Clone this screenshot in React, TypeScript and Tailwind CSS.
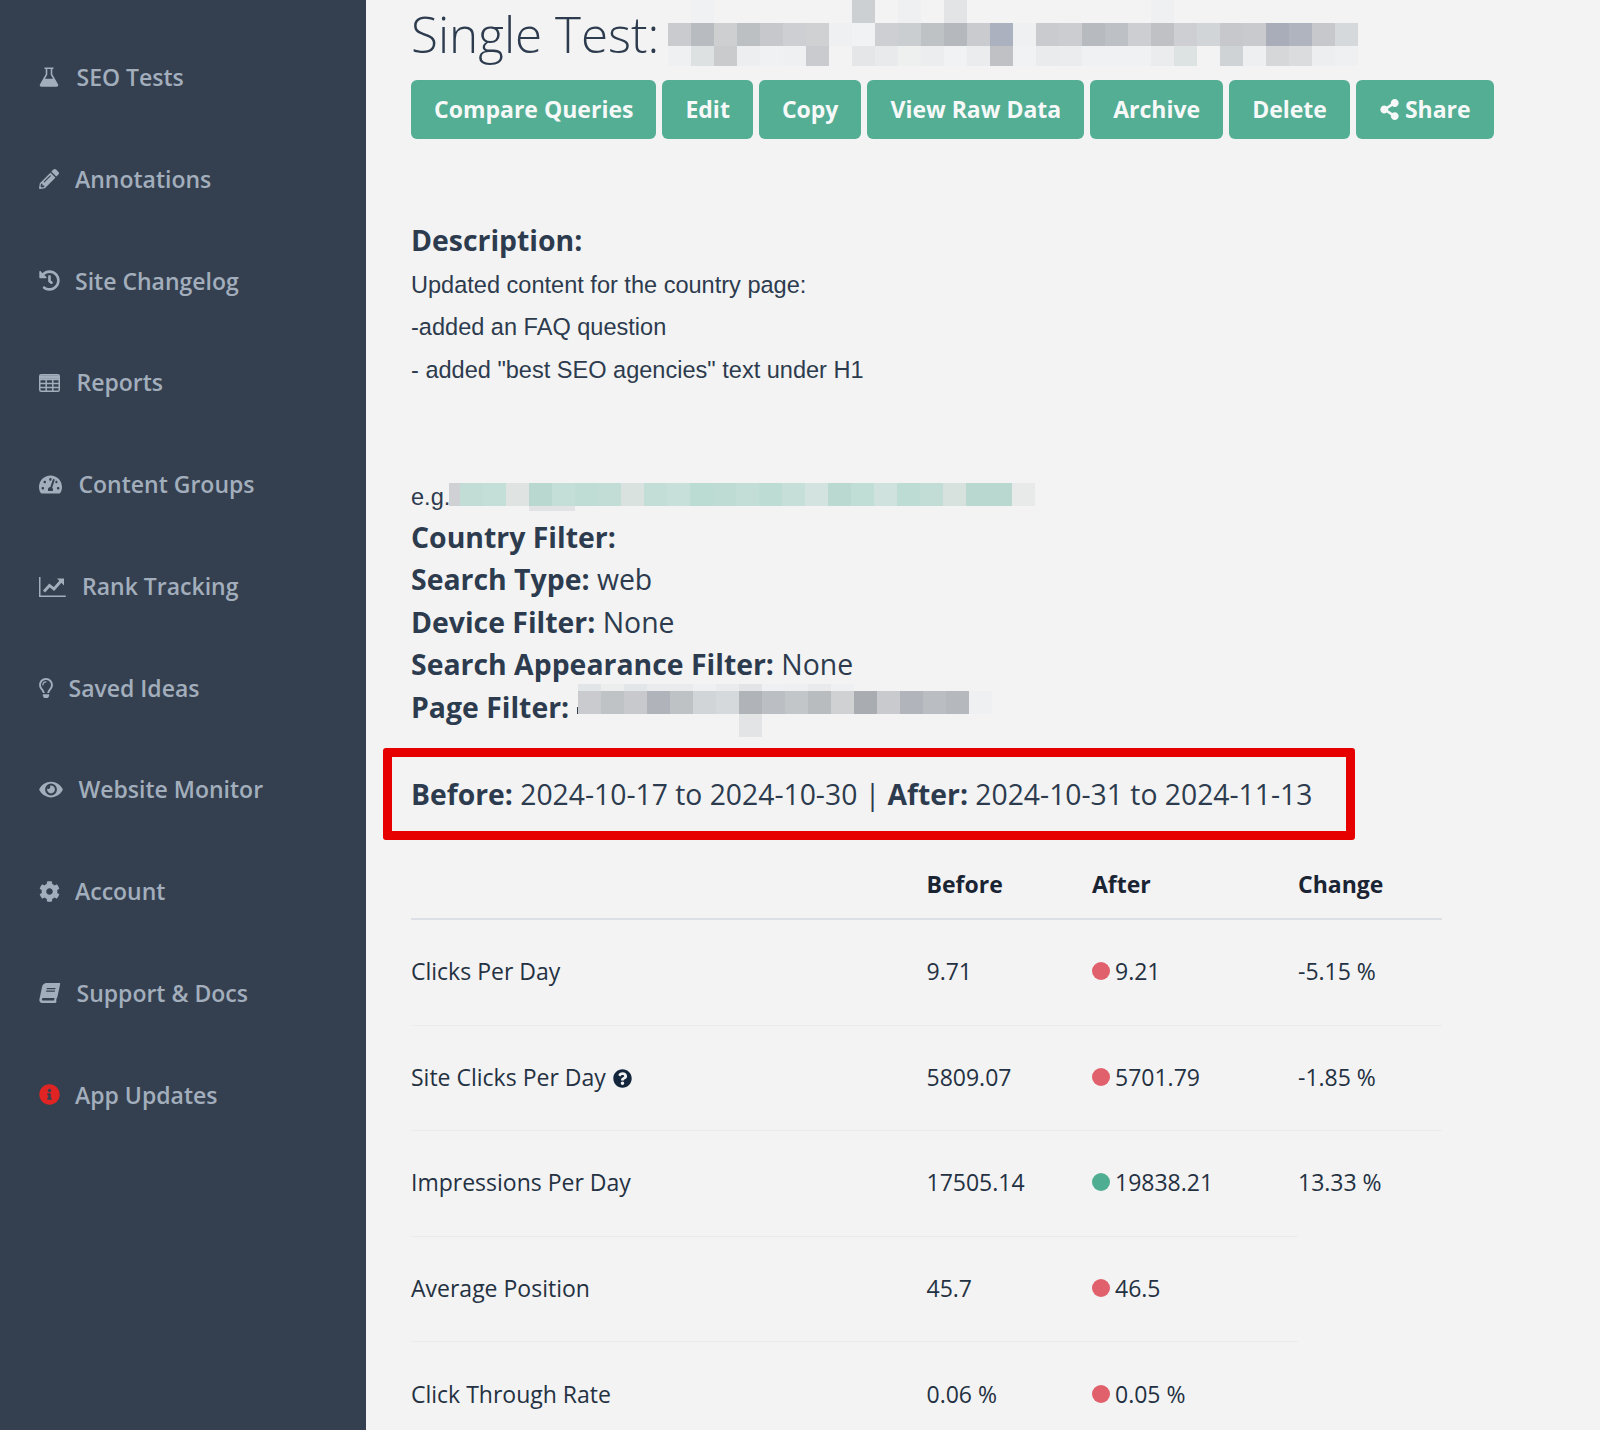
import { type ReactNode } from "react";
import {
  FaBook,
  FaCog,
  FaEye,
  FaHistory,
  FaInfoCircle,
  FaPencilAlt,
  FaQuestionCircle,
  FaRegLightbulb,
  FaShareAlt,
  FaTachometerAlt,
} from "react-icons/fa";

function FlaskIcon() {
  return (
    <svg viewBox="0 0 20 20" className="w-[20px] h-[20px]" fill="currentColor">
      <path d="M5.5.5h9v1.6h-1.2v5.2L19 17.2c.7 1.3-.1 2.6-1.5 2.6H2.500C1.100 19.800.300 18.500 1 17.200L6.700 7.300V2.100H5.500zM8.300 2.100v5.700L6 11.800h8l-2.300-4V2.100z" fillRule="evenodd" />
    </svg>
  );
}

function TableIcon() {
  return (
    <svg viewBox="0 0 21 18" className="w-[21px] h-[18px]" fill="none" stroke="currentColor" strokeWidth="1.5">
      <rect x=".75" y=".75" width="19.500" height="16.500" rx="1.500" />
      <path d="M.75 5.500h19.500M.75 9.500h19.500M.75 13.500h19.500M7.200 5.500v12M13.800 5.500v12" />
      <path d="M.75 3.100h19.500" strokeWidth="3.500" />
    </svg>
  );
}

function RankIcon() {
  return (
    <svg viewBox="0 0 27 21" className="w-[27px] h-[21px]" fill="none" stroke="currentColor">
      <path d="M.75 1v19.200h26" strokeWidth="1.500" />
      <path d="M5 15.500l5.500-6 4.500 3.500 7-8" strokeWidth="2.800" />
      <path d="M18 2.500h7v7z" fill="currentColor" stroke="none" />
    </svg>
  );
}

const navItems: { label: string; icon: ReactNode; box: string }[] = [
  { label: "SEO Tests", icon: <FlaskIcon />, box: "w-[37.5px]" },
  { label: "Annotations", icon: <FaPencilAlt className="w-[20px] h-[20px]" />, box: "w-[36px]" },
  { label: "Site Changelog", icon: <FaHistory className="w-[21px] h-[21px]" />, box: "w-[36px]" },
  { label: "Reports", icon: <TableIcon />, box: "w-[37.5px]" },
  { label: "Content Groups", icon: <FaTachometerAlt className="w-[23px] h-[21px]" />, box: "w-[39.5px]" },
  { label: "Rank Tracking", icon: <RankIcon />, box: "w-[43px]" },
  { label: "Saved Ideas", icon: <FaRegLightbulb className="w-[14px] h-[20px]" />, box: "w-[29.5px]" },
  { label: "Website Monitor", icon: <FaEye className="w-[24px] h-[21px]" />, box: "w-[39.5px]" },
  { label: "Account", icon: <FaCog className="w-[21px] h-[21px]" />, box: "w-[36px]" },
  { label: "Support & Docs", icon: <FaBook className="w-[21px] h-[20px] -skew-x-12" />, box: "w-[37.5px]" },
  { label: "App Updates", icon: <FaInfoCircle className="w-[21px] h-[21px] text-[#e02424]" />, box: "w-[36px]" },
];

type MosaicRow = { x: number; y: number; h: number; w?: number; cells: (string | null)[] };

// redacted text in the screenshot, painted as blocks over the line
function Mosaic({ rows, width, height, className }: { rows: MosaicRow[]; width: number; height: number; className: string }) {
  return (
    <svg width={width} height={height} viewBox={`0 0 ${width} ${height}`} shapeRendering="crispEdges" className={className}>
      {rows.map((row) =>
        row.cells.map((c, i) =>
          c ? <rect key={`${row.x}-${row.y}-${i}`} x={row.x + i * (row.w ?? 23)} y={row.y} width={row.w ?? 23} height={row.h} fill={c} /> : null
        )
      )}
    </svg>
  );
}

const titleRows: MosaicRow[] = [
  {
    x: 0, y: 0, h: 23,
    cells: [null, "#f0f1f2", null, null, null, null, null, null, "#cdd0d3", null, "#eff0f1", null, "#e3e4e6", null, null, null, null, null, null, null, null, "#eff0f1"],
  },
  {
    x: 0, y: 23, h: 23,
    cells: ["#c9cbce", "#b8bbbf", "#cdcfd1", "#bcc0c3", "#c6c8cb", "#cdcfd2", "#cfd1d3", "#eff0f1", "#f1f2f3", "#cdcfd2", "#cbced1", "#bec2c5", "#b5b9be", "#cacbcf", "#acb1bf", "#eff0f1", "#c9cbce", "#cbcdd0", "#b7babf", "#bdc0c4", "#cdced1", "#bfc1c4", "#cdcfd2", "#d2d5d8", "#c6c8cb", "#c8cacd", "#a8adb9", "#afb4be", "#c6c8cc", "#d6d9dc"],
  },
  {
    x: 0, y: 46, h: 20,
    cells: ["#eff0f1", "#dde1e2", "#c9cbcd", "#edeeef", "#f0f1f2", "#eff0f1", "#c9cbce", null, "#e5e6e8", "#e9eaec", "#eef0f0", "#ecedee", "#f1f2f3", "#ebecee", "#c0c1c4", "#f1f2f3", "#eaebed", "#ebecee", "#f0f1f2", "#f0f1f2", "#f0f1f2", "#ebeced", "#dde2e3", null, "#cfd3d6", "#eeeff0", "#d5d7d9", "#dadcde", "#edeef0", "#eff0f1"],
  },
];

const urlRows: MosaicRow[] = [
  { x: 0, y: 0, h: 23, w: 11, cells: ["#cfd1d4"] },
  {
    x: 11, y: 0, h: 23,
    cells: ["#c1ddd6", "#c4dfd8", "#dfe3e2", "#b9d9d0", "#c3dfd8", "#bfddd5", "#c1ddd6", "#d9e2df", "#c2ded7", "#c7e1da", "#bbdcd3", "#bedcd4", "#c2ded7", "#bcdcd4", "#c6dfd9", "#d3e3df", "#b9d9d1", "#c1ded6", "#d0e2dd", "#bddcd4", "#c2ddd6", "#d7e2df", "#b9d9d0", "#b9d9d0", "#e8eaea"],
  },
  { x: 80, y: 23, h: 5, w: 46, cells: ["#e2e3e5"] },
];

const pageRows: MosaicRow[] = [
  { x: 1, y: 0, h: 7, cells: ["#e1e5e7", "#eceded", "#e2e6e8", "#e9ebec", "#e9ebec", "#eff0f1", "#eaebec", "#e3e4e6", "#eff0f1", "#eeeff0", "#e8eaeb", "#eff0f1"] },
  { x: 1, y: 7, h: 23, cells: ["#c9cbce", "#c0c3c6", "#c7c9cc", "#b0b3b9", "#bfc2c5", "#d1d5d8", "#d6d9db", "#b0b3b7", "#bbbec2", "#c3c6c9", "#b9bcbf", "#cfd1d3", "#a9adb2", "#c9cacd", "#b1b4ba", "#babdc1", "#b5b8bc", "#eff0f1"] },
  { x: 162, y: 30, h: 23, cells: ["#e3e4e6"] },
  { x: 0, y: 23, h: 7, w: 1, cells: ["#33404f"] },
];

const buttonClass =
  "h-[59.5px] rounded-[6px] bg-[#53ae94] px-[23px] text-[23px] font-bold text-[#f7f9f9] flex items-center";

type Row = { name: string; help?: boolean; before: string; after: string; good: boolean; change?: string; line: boolean };

const rows: Row[] = [
  { name: "Clicks Per Day", before: "9.71", after: "9.21", good: false, change: "-5.15 %", line: true },
  { name: "Site Clicks Per Day", help: true, before: "5809.07", after: "5701.79", good: false, change: "-1.85 %", line: true },
  { name: "Impressions Per Day", before: "17505.14", after: "19838.21", good: true, change: "13.33 %", line: false },
  { name: "Average Position", before: "45.7", after: "46.5", good: false, line: false },
  { name: "Click Through Rate", before: "0.06 %", after: "0.05 %", good: false, line: false },
];

export default function App() {
  return (
    <div className="flex h-[1430px] w-[1600px] overflow-hidden bg-[#f3f3f3] font-['Open_Sans',sans-serif] text-[#2d3b4e]">
      <aside className="w-[366px] shrink-0 bg-[#344050] pt-[26.6px] pl-[39px] text-[#a3aebc]">
        <nav className="flex flex-col">
          {navItems.map((item) => (
            <div key={item.label} className="flex h-[101.75px] items-center text-[23px] font-semibold">
              <span className={`${item.box} flex shrink-0 items-center`}>{item.icon}</span>
              {item.label}
            </div>
          ))}
        </nav>
      </aside>

      <main className="flex-1 pl-[45px]">
        <div className="relative h-[72px]">
          <h1 className="text-[49.4px] leading-[68px] font-light">Single Test:</h1>
          <Mosaic rows={titleRows} width={690} height={66} className="absolute left-[257px] top-0" />
        </div>

        <div className="mt-[7.5px] flex gap-[6px]">
          <button className={buttonClass}>Compare Queries</button>
          <button className={buttonClass}>Edit</button>
          <button className={buttonClass}>Copy</button>
          <button className={buttonClass}>View Raw Data</button>
          <button className={buttonClass}>Archive</button>
          <button className={buttonClass}>Delete</button>
          <button className={buttonClass}>
            <FaShareAlt className="mr-[5px] h-[21px] w-[21px]" />
            Share
          </button>
        </div>

        <div className="mt-[80px] text-[28.4px] leading-[42.5px]">
          <div className="mb-[2.4px] font-bold">Description:</div>
          <div className="font-['Liberation_Sans',Arial,sans-serif] text-[23.55px]">
            <p>Updated content for the country page:</p>
            <p>-added an FAQ question</p>
            <p>- added "best SEO agencies" text under H1</p>
            <div className="relative mt-[85px] h-[39.5px]">
              e.g.
              <Mosaic rows={urlRows} width={600} height={28} className="absolute left-[38px] top-[7px]" />
            </div>
          </div>
          <p><b>Country Filter:</b></p>
          <p><b>Search Type:</b> web</p>
          <p><b>Device Filter:</b> None</p>
          <p><b>Search Appearance Filter:</b> None</p>
          <div className="relative h-[42.5px]">
            <b>Page Filter:</b>
            <Mosaic rows={pageRows} width={420} height={54} className="absolute left-[166px] top-[-2px]" />
          </div>
        </div>

        <div className="ml-[-28px] mt-[20px] flex h-[92px] w-[972px] items-center rounded-[3px] border-[9px] border-[#e60000] pl-[19px] text-[28.3px]">
          <p className="whitespace-nowrap"><b>Before:</b> 2024-10-17 to 2024-10-30 | <b>After:</b> 2024-10-31 to 2024-11-13</p>
        </div>

        <table className="mt-[12px] w-[1031px] table-fixed border-separate border-spacing-0 text-[23px] text-[#243142]">
          <colgroup>
            <col className="w-[515.5px]" />
            <col className="w-[165.5px]" />
            <col className="w-[206px]" />
            <col className="w-[144px]" />
          </colgroup>
          <thead>
            <tr className="h-[68px] text-left text-[#1a2433]">
              <th className="border-b-2 border-[#dcdfe4] pb-[2px]"></th>
              <th className="border-b-2 border-[#dcdfe4] pb-[2px] font-bold">Before</th>
              <th className="border-b-2 border-[#dcdfe4] pb-[2px] font-bold">After</th>
              <th className="border-b-2 border-[#dcdfe4] pb-[2px] font-bold">Change</th>
            </tr>
          </thead>
          <tbody>
            {rows.map((r, i) => (
              <tr key={r.name} className="h-[105.5px]">
                <td className={`pb-[2px] ${i < 4 ? "border-b border-[#e9ebee]" : ""}`}>
                  {r.name}
                  {r.help && <FaQuestionCircle className="ml-[7px] inline h-[19px] w-[19px] align-[-2px] text-[#14263c]" />}
                </td>
                <td className={`pb-[2px] ${i < 4 ? "border-b border-[#e9ebee]" : ""}`}>{r.before}</td>
                <td className={`pb-[2px] ${i < 4 ? "border-b border-[#e9ebee]" : ""}`}>
                  <span className={`mr-[5px] inline-block h-[18px] w-[18px] rounded-full ${r.good ? "bg-[#4fae92]" : "bg-[#e0606b]"}`} />
                  {r.after}
                </td>
                {r.change && <td className={`pb-[2px] border-b ${r.line ? "border-[#e9ebee]" : "border-transparent"}`}>{r.change}</td>}
              </tr>
            ))}
          </tbody>
        </table>
      </main>
    </div>
  );
}
